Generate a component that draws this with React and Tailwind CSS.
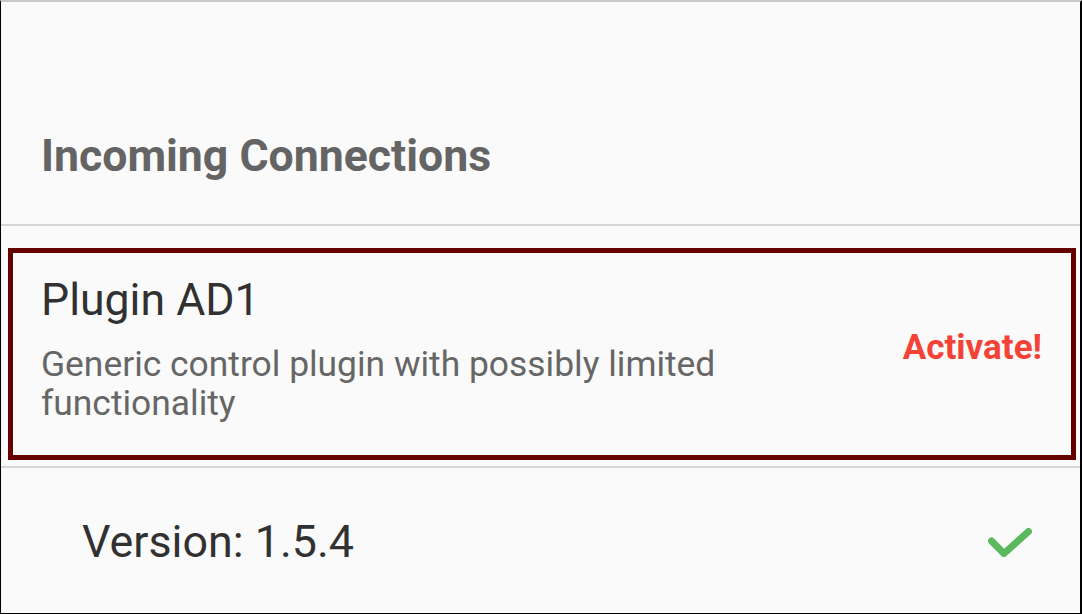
import React from "react";

function CheckMark() {
  return (
    <svg width="44" height="29" viewBox="0 0 44 29" fill="none">
      <polyline
        points="3.5,13 16,25.5 40.5,3.5"
        stroke="#5cb85c"
        strokeWidth="7"
        strokeLinecap="round"
        strokeLinejoin="round"
      />
    </svg>
  );
}

export default function App() {
  return (
    <div
      className="w-[1082px] h-[614px] overflow-hidden bg-[#fafafa] border-t-2 border-t-[#c8c8c8] border-l border-l-black border-r-2 border-r-black border-b border-b-black"
      style={{ fontFamily: "Roboto, 'Noto Sans', sans-serif" }}
    >
      {/* header */}
      <div className="h-[222px] pt-[127px] pl-[40px]">
        <h1 className="text-[44.6px] leading-[54px] font-bold text-[#646464]">
          Incoming Connections
        </h1>
      </div>
      <div className="h-[2px] bg-[#d6d6d6]" />

      {/* plugin card */}
      <div className="mt-[22px] ml-[7px] mr-[4px] h-[212px] border-[5px] border-[#660000] flex">
        <div className="flex-1 pl-[28px] pt-[21px]">
          <div className="text-[44.6px] leading-[52px] text-[#313131]">Plugin AD1</div>
          <div className="mt-[19px] w-[800px] text-[35.4px] leading-[39px] text-[#666666]">
            Generic control plugin with possibly limited functionality
          </div>
        </div>
        <div className="pr-[29px] mt-[75px] text-[35px] leading-[40px] font-bold text-[#f44336]">
          Activate!
        </div>
      </div>
      <div className="mt-[6px] h-[2px] bg-[#d6d6d6]" />

      {/* version row */}
      <div className="flex items-center justify-between pt-[48px] pl-[81px] pr-[48px]">
        <span className="text-[44.8px] leading-[52px] text-[#313131]">Version: 1.5.4</span>
        <CheckMark />
      </div>
    </div>
  );
}
